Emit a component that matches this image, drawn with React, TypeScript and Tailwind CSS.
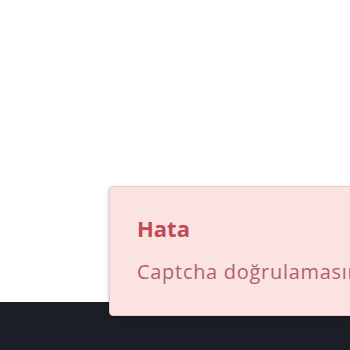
export default function App() {
  return (
    <div className="relative h-[350px] w-[350px] overflow-hidden bg-white font-['Open_Sans',sans-serif]">
      <div className="flex h-full flex-col">
        <div className="flex-1" />
        <footer className="h-[48px] bg-[#1b1e26]" />
      </div>

      {/* Toast */}
      <div className="absolute left-[109px] top-[186px] w-[340px] rounded-[4px] border border-[#efc6c8] bg-[#fbe3e4] px-[27px] pb-[28px] pt-[26px] shadow-[0_2px_4px_rgba(0,0,0,0.25)]">
        <div className="text-[22px] font-bold leading-[30px] text-[#c14a53]">Hata</div>
        <div className="mt-[14px] whitespace-nowrap text-[20px] leading-[30px] tracking-[0.7px] text-[#b0626a]">
          Captcha doğrulamasını tamamlayın.
        </div>
      </div>
    </div>
  );
}
